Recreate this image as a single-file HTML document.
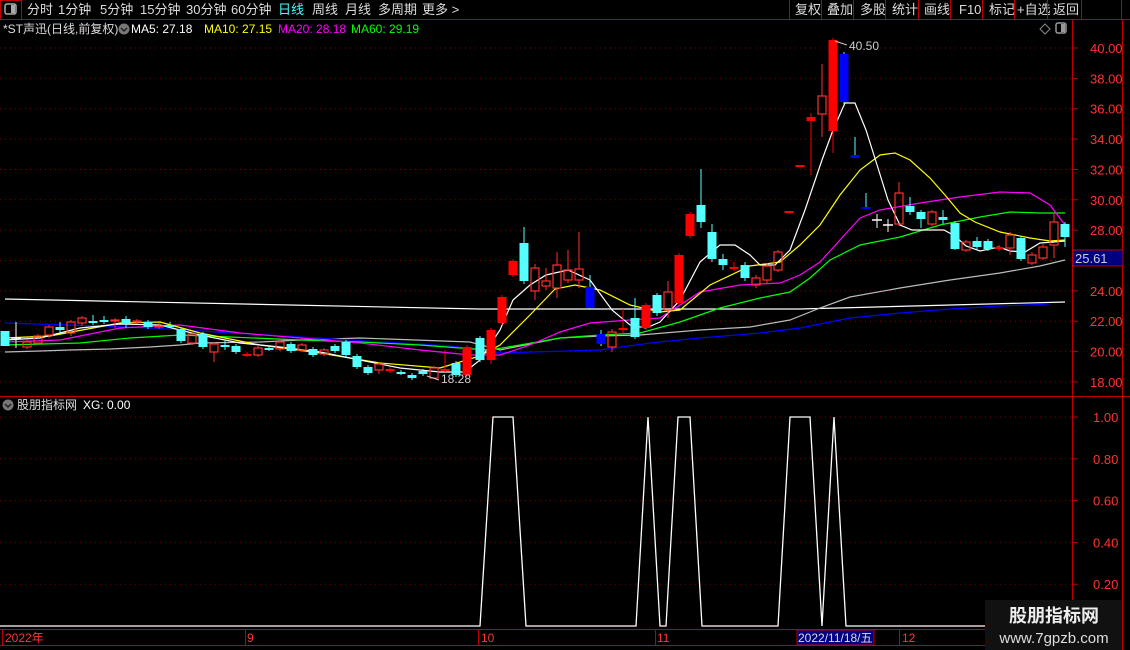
<!DOCTYPE html>
<html><head><meta charset="utf-8"><style>
html,body{margin:0;padding:0;background:#000;width:1130px;height:650px;overflow:hidden;font-family:"Liberation Sans","Noto Sans CJK SC",sans-serif}
svg{position:absolute;left:0;top:0}
</style></head><body>
<svg id="s" width="1130" height="650" xmlns="http://www.w3.org/2000/svg" font-family="Liberation Sans, Noto Sans CJK SC, sans-serif">
<rect width="1130" height="650" fill="#000"/>
<!-- toolbar -->
<line x1="0" y1="19.5" x2="1130" y2="19.5" stroke="#c00000"/>
<rect x="0.5" y="0.5" width="21" height="19" fill="none" stroke="#c00000"/>
<rect x="5" y="4" width="11" height="10" rx="2" fill="none" stroke="#aaa" stroke-width="1.5"/><rect x="11" y="5" width="4" height="8" fill="#aaa"/>
<g font-size="13" fill="#ddd">
<text x="27" y="14">分时</text><text x="58" y="14">1分钟</text><text x="100" y="14">5分钟</text><text x="140" y="14">15分钟</text><text x="186" y="14">30分钟</text><text x="231" y="14">60分钟</text>
<text x="278" y="14" fill="#4ff">日线</text><text x="312" y="14">周线</text><text x="345" y="14">月线</text><text x="378" y="14">多周期</text><text x="422" y="14">更多 &gt;</text>
<text x="795" y="14">复权</text><text x="827" y="14">叠加</text><text x="860" y="14">多股</text><text x="892" y="14">统计</text><text x="924" y="14">画线</text><text x="959" y="14">F10</text><text x="989" y="14">标记</text><text x="1017" y="14">+自选</text><text x="1053" y="14">返回</text>
</g>
<g stroke="#c00000"><line x1="789.5" y1="0" x2="789.5" y2="19"/><line x1="821.5" y1="0" x2="821.5" y2="19"/><line x1="853.5" y1="0" x2="853.5" y2="19"/><line x1="885.5" y1="0" x2="885.5" y2="19"/><line x1="918.5" y1="0" x2="918.5" y2="19"/><line x1="950.5" y1="0" x2="950.5" y2="19"/><line x1="982.5" y1="0" x2="982.5" y2="19"/><line x1="1014.5" y1="0" x2="1014.5" y2="19"/><line x1="1047.5" y1="0" x2="1047.5" y2="19"/><line x1="1081.5" y1="0" x2="1081.5" y2="19"/><line x1="1121.5" y1="0" x2="1121.5" y2="19"/></g>
<!-- info row -->
<g font-size="12">
<text x="3" y="33" fill="#ddd">*ST声迅(日线,前复权)</text>
<circle cx="124" cy="29" r="5.5" fill="#777"/><path d="M121 28 l3 3 l3 -3" stroke="#222" fill="none" stroke-width="1.5"/>
<text x="131" y="33" fill="#fff">MA5: 27.18</text><text x="204" y="33" fill="#ff0">MA10: 27.15</text><text x="278" y="33" fill="#f0f">MA20: 28.18</text><text x="351" y="33" fill="#0f0">MA60: 29.19</text>
</g>
<path d="M1045 24 l5 5 l-5 5 l-5 -5z" fill="none" stroke="#888"/>
<rect x="1056" y="23" width="10" height="10" rx="2" fill="none" stroke="#999" stroke-width="1.5"/><rect x="1061" y="24" width="4" height="8" fill="#999"/>
<!-- axes -->
<line x1="1072.5" y1="20" x2="1072.5" y2="650" stroke="#c00000"/>
<line x1="1122.5" y1="20" x2="1122.5" y2="650" stroke="#c00000"/>
<line x1="0" y1="396.5" x2="1130" y2="396.5" stroke="#c00000"/>
<line x1="0" y1="629.5" x2="1072" y2="629.5" stroke="#c00000"/>
<line x1="0" y1="645.5" x2="1072" y2="645.5" stroke="#c00000"/>
<g id="grid" stroke="#800000" stroke-dasharray="1 4"></g>
<g id="axis" font-size="13" fill="#f33"></g>
<rect x="1073" y="250" width="50" height="16" fill="#000080" stroke="#c00000"/>
<text x="1075" y="263" font-size="13" fill="#ccc">25.61</text>
<g id="lines" fill="none" stroke-width="1.2"></g>
<g id="candles"></g>
<text x="849" y="50" font-size="12" fill="#ccc">40.50</text><path d="M835 41 l12 4" stroke="#ccc"/>
<text x="441" y="383" font-size="12" fill="#ccc">18.28</text><path d="M427 376 l12 4" stroke="#ccc"/>
<!-- indicator -->
<g font-size="12"><circle cx="8" cy="405" r="5.5" fill="#777"/><path d="M5 404 l3 3 l3 -3" stroke="#222" fill="none" stroke-width="1.5"/>
<text x="17" y="409" fill="#ddd">股朋指标网</text><text x="83" y="409" fill="#fff">XG: 0.00</text></g>
<polyline fill="none" stroke="#fff" stroke-width="1.3" points="0,626 480,626 493,417 513,417 526,626 636,626 648,417 660,626 666,626 678,417 690,417 702,626 778,626 790,417 810,417 822,626 834,417 846,626 1072,626"/>
<!-- date axis -->
<g font-size="12" fill="#f33"><text x="5" y="642">2022年</text><text x="247" y="642">9</text><text x="481" y="642">10</text><text x="657" y="642">11</text><text x="902" y="642">12</text></g>
<g stroke="#c00000"><line x1="2.5" y1="630" x2="2.5" y2="645"/><line x1="245.5" y1="630" x2="245.5" y2="645"/><line x1="478.5" y1="630" x2="478.5" y2="645"/><line x1="655.5" y1="630" x2="655.5" y2="645"/><line x1="899.5" y1="630" x2="899.5" y2="645"/></g>
<rect x="797" y="630" width="77" height="15" fill="#000080" stroke="#c00000"/>
<text x="798" y="642" font-size="12" fill="#ddd">2022/11/18/五</text>
<!-- watermark -->
<rect x="985" y="600" width="137" height="50" fill="#111"/>
<text x="1054" y="622" font-size="18" font-weight="bold" fill="#eee" text-anchor="middle">股朋指标网</text>
<text x="1054" y="643" font-size="15" fill="#ddd" text-anchor="middle">www.7gpzb.com</text>
</svg>
<script>
var NS="http://www.w3.org/2000/svg";
function el(p,t,a){var e=document.createElementNS(NS,t);for(var k in a)e.setAttribute(k,a[k]);p.appendChild(e);return e;}
var grid=document.getElementById('grid'),axis=document.getElementById('axis');
for(var p=18;p<=40;p+=2){var y=48+(40-p)*15.18;el(grid,'line',{x1:0,y1:y,x2:1071,y2:y});var t=el(axis,'text',{x:1090,y:y+5});t.textContent=p.toFixed(2);el(axis,'line',{x1:1072,y1:y,x2:1078,y2:y,stroke:'#c00000'});}
for(var i=1;i<=5;i++){var y=626-i*0.2*209;el(grid,'line',{x1:0,y1:y,x2:1071,y2:y});var t=el(axis,'text',{x:1093,y:y+5});t.textContent=(i*0.2).toFixed(2);el(axis,'line',{x1:1072,y1:y,x2:1078,y2:y,stroke:'#c00000'});}
var L=document.getElementById('lines');
var lines=[
['#fff',"5,299 480,309 800,309 1065,302"],
['#bbb',"5,352 40,351 70,350 110,349 150,347 180,345 200,343 260,342 300,340 360,338 470,342 500,350 540,342 560,338 600,336 640,335 700,330 750,327 790,320 820,308 850,297 900,288 950,280 1000,273 1040,266 1065,260"],
['#0000ff',"5,323 100,326 150,328 200,331 300,337 400,343 450,346 500,353 600,350 650,343 700,338 760,333 800,328 850,318 900,313 950,309 1000,306 1050,304"],
['#0f0',"5,345 80,343 130,338 180,335 230,337 300,340 360,342 420,345 460,348 490,350 520,345 560,338 600,335 640,333 680,322 720,308 760,298 790,292 810,278 830,260 860,245 900,237 940,225 980,217 1010,212 1040,213 1065,213"],
['#f0f',"5,342 60,340 120,328 180,325 240,333 300,338 360,343 420,350 470,355 500,355 530,345 560,332 590,323 630,320 660,318 700,292 740,285 780,283 800,275 820,262 840,240 860,218 880,210 920,203 960,197 1000,192 1030,193 1050,205 1065,225"],
['#ff0',"5,338 50,336 120,323 160,322 200,333 260,345 320,353 380,363 440,368 480,356 500,345 530,315 555,289 575,285 600,290 630,305 660,312 680,310 710,285 750,266 780,262 800,245 820,225 840,195 860,170 880,155 895,153 910,160 930,178 945,195 960,213 975,222 1000,232 1030,238 1050,241 1065,240"],
['#fff',"5,340 40,338 80,328 120,324 160,325 200,335 240,343 280,347 320,352 360,360 400,368 440,372 465,372 480,360 500,330 513,300 530,285 546,275 568,270 590,280 612,310 630,325 646,328 660,322 680,300 700,262 720,245 735,245 750,255 760,265 775,265 790,250 805,210 822,160 833,130 845,103 855,103 866,130 878,168 888,200 900,225 912,230 930,230 944,230 955,236 966,246 980,251 999,247 1010,251 1025,252 1040,243 1054,242 1065,241"]];
lines.forEach(function(l){el(L,'polyline',{points:l[1],stroke:l[0]});});
// x, top, bottom, high, low, type
var C=[[5,331,346,331,346,'c'],[16,338,339,322,348,'w'],[27,342,347,340,349,'r'],[38,336,343,334,345,'r'],[49,327,335,325,338,'r'],[60,327,330,322,333,'c'],[71,322,333,320,336,'r'],[82,318,323,316,326,'r'],[93,321,322,315,325,'c'],[104,320,321,316,324,'c'],[115,320,321,318,328,'r'],[126,319,324,316,328,'c'],[137,321,322,319,324,'r'],[148,322,327,320,329,'c'],[159,326,327,323,329,'r'],[170,325,326,322,328,'c'],[181,329,341,327,343,'c'],[192,334,343,332,345,'r'],[203,334,347,332,349,'c'],[214,344,352,342,362,'r'],[225,345,346,340,350,'c'],[236,346,352,344,354,'c'],[247,354,356,352,357,'R'],[258,348,355,346,357,'r'],[269,348,349,345,351,'c'],[280,342,349,340,351,'r'],[291,344,351,342,353,'c'],[302,345,350,343,352,'r'],[313,349,355,347,357,'c'],[324,350,354,348,356,'r'],[335,346,351,344,353,'c'],[346,342,355,340,357,'c'],[357,356,367,354,369,'c'],[368,367,373,365,375,'c'],[379,364,370,362,374,'r'],[390,369,371,367,373,'R'],[401,372,373,370,375,'c'],[412,375,378,373,380,'c'],[423,371,374,369,376,'c'],[434,368,378,366,379,'r'],[445,369,371,350,372,'R'],[456,363,375,361,377,'c'],[467,347,375,345,377,'R'],
[480,338,360,336,362,'c'],[491,330,360,328,364,'R'],[502,297,323,295,325,'R'],[513,261,275,259,277,'R'],[524,243,281,227,284,'c'],[535,268,291,264,300,'r'],[546,281,286,268,290,'r'],[557,265,288,252,298,'r'],[568,270,280,250,283,'r'],[579,269,280,232,288,'r'],[590,287,308,275,309,'b'],[601,334,344,330,346,'b'],[612,332,347,329,352,'r'],[623,328,330,309,333,'R'],[635,318,337,298,339,'c'],[646,305,328,303,330,'R'],[657,295,313,293,316,'c'],[668,292,310,281,318,'r'],[679,255,303,253,305,'R'],[690,214,236,212,238,'R'],[701,205,222,169,228,'c'],[712,232,259,224,262,'c'],[723,259,265,254,270,'c'],[734,267,269,262,271,'R'],[745,265,278,262,281,'c'],[756,278,285,275,288,'r'],[767,266,280,263,283,'r'],[778,252,270,250,272,'r'],[789,211,213,211,213,'R'],[800,165,167,165,167,'R'],[811,117,121,113,175,'R'],[822,96,114,64,137,'r'],[833,40,131,38,153,'R'],[844,54,102,52,104,'b'],[855,155,158,137,158,'b'],[866,207,209,193,209,'b'],[877,220,222,214,228,'w'],[888,225,227,219,232,'w'],[899,193,224,182,226,'r'],[910,206,212,197,215,'c'],[921,212,219,210,228,'c'],[932,212,224,210,226,'r'],[943,217,220,210,224,'c'],[955,223,249,221,250,'c'],[966,242,250,240,252,'r'],[977,241,247,237,250,'c'],[988,241,249,239,251,'c'],[999,247,249,245,251,'R'],[1010,235,248,232,255,'r'],[1021,238,259,236,261,'c'],[1032,255,263,252,265,'r'],[1043,247,258,244,260,'r'],[1054,222,245,213,258,'r'],[1065,224,237,222,247,'c']];
var G=document.getElementById('candles');
var col={c:'#55ffff',r:'#ff3030',R:'#ff0000',b:'#0000ff',w:'#ffffff'};
C.forEach(function(c){var x=c[0],t=c[1],b=c[2],h=c[3],l=c[4],k=c[5],co=col[k];
 var wc=k=='b'?'#55ffff':co;
 if(k=='w'){el(G,'line',{x1:x,y1:h,x2:x,y2:l,stroke:co});el(G,'line',{x1:x-5,y1:t,x2:x+5,y2:t,stroke:co,'stroke-width':1.5});return;}
 if(k=='r'){el(G,'line',{x1:x,y1:h,x2:x,y2:t,stroke:co});el(G,'line',{x1:x,y1:b,x2:x,y2:l,stroke:co});el(G,'rect',{x:x-4,y:t,width:8,height:Math.max(1,b-t),fill:'none',stroke:co,'stroke-width':1.2});}
 else{el(G,'line',{x1:x,y1:h,x2:x,y2:l,stroke:wc});el(G,'rect',{x:x-4.5,y:t,width:9,height:Math.max(2,b-t),fill:co});}
});
</script>
</body></html>
